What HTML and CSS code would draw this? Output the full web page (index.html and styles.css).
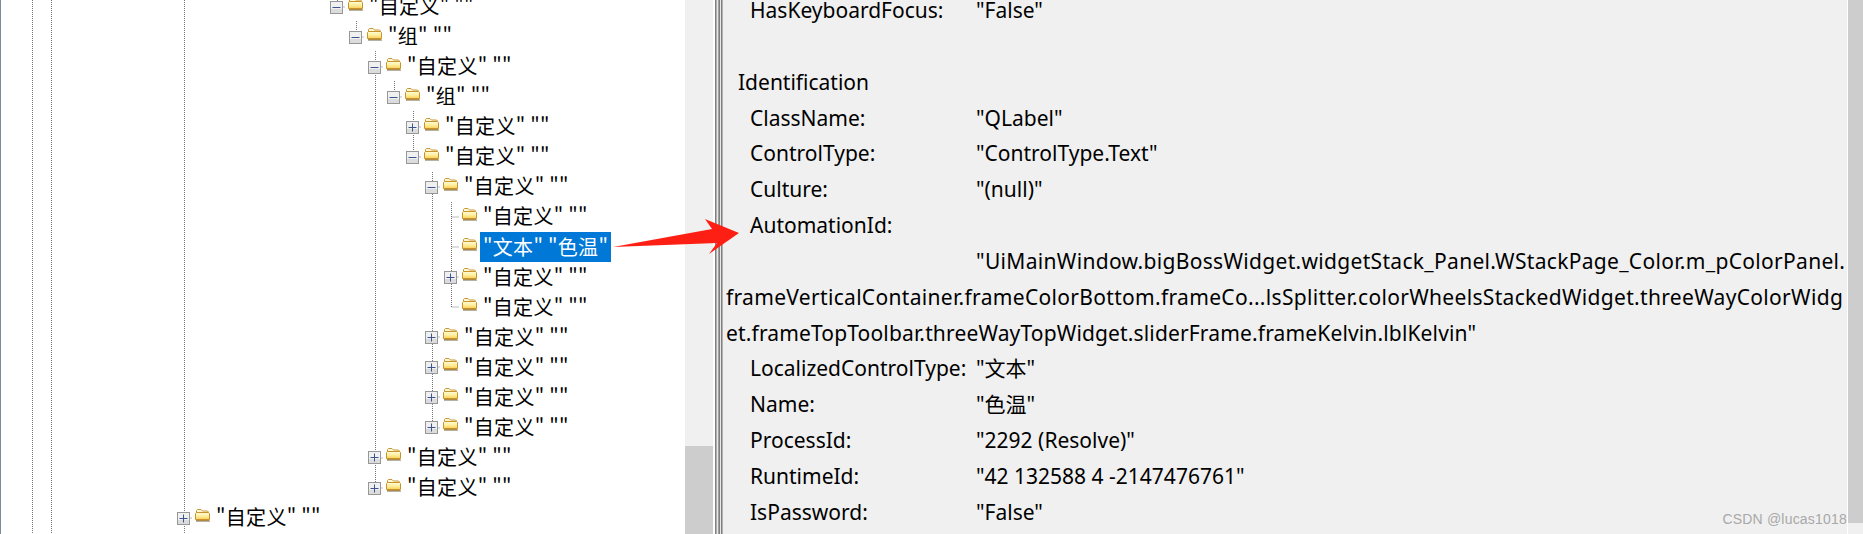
FILE: index.html
```html
<!DOCTYPE html>
<html lang="zh">
<head>
<meta charset="utf-8">
<title>Inspect</title>
<link rel="stylesheet" href="styles.css">
</head>
<body>
<svg class="defs" width="0" height="0" aria-hidden="true">
  <defs>
    <linearGradient id="fg" x1="0" y1="0" x2="0" y2="1">
      <stop offset="0" stop-color="#fffbd8"/>
      <stop offset=".5" stop-color="#fff0a0"/>
      <stop offset="1" stop-color="#fbcf55"/>
    </linearGradient>
    <symbol id="folder" viewBox="0 0 15 14">
      <path d="M1.5 5V2.5L2.5 1.5H6L7.5 3H12.5L13.5 4V5" fill="#fff8d0" stroke="#c8953a"/>
      <path d="M.5 11.5V5.5L1.5 4.5H13.5L14.5 5.5V11.5Z" fill="url(#fg)" stroke="#c8922c"/>
      <path d="M1 12.5H14.5" stroke="#b08a40"/>
      <path d="M1 13.5H15" stroke="#b5b2a8"/>
    </symbol>
    <symbol id="minus" viewBox="0 0 13 13">
      <rect x=".5" y=".5" width="12" height="12" fill="#f0f0f0" stroke="#979797"/>
      <rect x="1" y="8" width="11" height="4" fill="#dcdcdc"/>
      <path d="M2.5 6.5H10.5" stroke="#3c5390"/>
    </symbol>
    <symbol id="plus" viewBox="0 0 13 13">
      <rect x=".5" y=".5" width="12" height="12" fill="#f0f0f0" stroke="#979797"/>
      <rect x="1" y="8" width="11" height="4" fill="#dcdcdc"/>
      <path d="M2.5 6.5H10.5M6.5 2.5V10.5" stroke="#3c5390"/>
    </symbol>
  </defs>
</svg>
<main class="window">
  <section class="tree">
    <svg class="guides" width="685" height="534" aria-hidden="true">
      <path d="M32.5 0V534M51.5 0V534M184.5 0V534M337.5 0V7M356.5 21V37M375.5 51V488M394.5 81V97M413.5 111V157M432.5 172V428M451.5 202V307"/>
      <path d="M337.5 7H345M356.5 37H364M375.5 67H383M394.5 97H402M413.5 127H421M413.5 157H421M432.5 187H440M451.5 217H459M451.5 247H459M451.5 277H459M451.5 307H459M432.5 337H440M432.5 367H440M432.5 397H440M432.5 428H440M375.5 458H383M375.5 488H383M184.5 518H192"/>
    </svg>
    <div class="rows">
      <div class="row l15"><svg class="exp"><use href="#minus"/></svg><svg class="fld"><use href="#folder"/></svg><span class="lbl">"自定义" ""</span></div>
      <div class="row l16"><svg class="exp"><use href="#minus"/></svg><svg class="fld"><use href="#folder"/></svg><span class="lbl">"组" ""</span></div>
      <div class="row l17"><svg class="exp"><use href="#minus"/></svg><svg class="fld"><use href="#folder"/></svg><span class="lbl">"自定义" ""</span></div>
      <div class="row l18"><svg class="exp"><use href="#minus"/></svg><svg class="fld"><use href="#folder"/></svg><span class="lbl">"组" ""</span></div>
      <div class="row l19"><svg class="exp"><use href="#plus"/></svg><svg class="fld"><use href="#folder"/></svg><span class="lbl">"自定义" ""</span></div>
      <div class="row l19"><svg class="exp"><use href="#minus"/></svg><svg class="fld"><use href="#folder"/></svg><span class="lbl">"自定义" ""</span></div>
      <div class="row l20"><svg class="exp"><use href="#minus"/></svg><svg class="fld"><use href="#folder"/></svg><span class="lbl">"自定义" ""</span></div>
      <div class="row l21"><span class="exp"></span><svg class="fld"><use href="#folder"/></svg><span class="lbl">"自定义" ""</span></div>
      <div class="row l21"><span class="exp"></span><svg class="fld"><use href="#folder"/></svg><span class="lbl sel">"文本" "色温"</span></div>
      <div class="row l21"><svg class="exp"><use href="#plus"/></svg><svg class="fld"><use href="#folder"/></svg><span class="lbl">"自定义" ""</span></div>
      <div class="row l21"><span class="exp"></span><svg class="fld"><use href="#folder"/></svg><span class="lbl">"自定义" ""</span></div>
      <div class="row l20"><svg class="exp"><use href="#plus"/></svg><svg class="fld"><use href="#folder"/></svg><span class="lbl">"自定义" ""</span></div>
      <div class="row l20"><svg class="exp"><use href="#plus"/></svg><svg class="fld"><use href="#folder"/></svg><span class="lbl">"自定义" ""</span></div>
      <div class="row l20"><svg class="exp"><use href="#plus"/></svg><svg class="fld"><use href="#folder"/></svg><span class="lbl">"自定义" ""</span></div>
      <div class="row l20"><svg class="exp"><use href="#plus"/></svg><svg class="fld"><use href="#folder"/></svg><span class="lbl">"自定义" ""</span></div>
      <div class="row l17"><svg class="exp"><use href="#plus"/></svg><svg class="fld"><use href="#folder"/></svg><span class="lbl">"自定义" ""</span></div>
      <div class="row l17"><svg class="exp"><use href="#plus"/></svg><svg class="fld"><use href="#folder"/></svg><span class="lbl">"自定义" ""</span></div>
      <div class="row l7"><svg class="exp"><use href="#plus"/></svg><svg class="fld"><use href="#folder"/></svg><span class="lbl">"自定义" ""</span></div>
    </div>
  </section>
  <div class="tree-scroll"><div class="tree-thumb"></div></div>
  <div class="splitter"></div>
  <section class="props">
    <div class="prop"><span class="key">HasKeyboardFocus:</span><span>"False"</span></div>
    <div class="blank"></div>
    <div class="group">Identification</div>
    <div class="prop"><span class="key">ClassName:</span><span>"QLabel"</span></div>
    <div class="prop"><span class="key">ControlType:</span><span>"ControlType.Text"</span></div>
    <div class="prop"><span class="key">Culture:</span><span>"(null)"</span></div>
    <div class="prop"><span class="key">AutomationId:</span><span></span></div>
    <div class="prop"><span class="key"></span><span class="long">"UiMainWindow.bigBossWidget.widgetStack_Panel.WStackPage_Color.m_pColorPanel.</span></div>
    <div class="wrap long">frameVerticalContainer.frameColorBottom.frameCo...lsSplitter.colorWheelsStackedWidget.threeWayColorWidg</div>
    <div class="wrap mid">et.frameTopToolbar.threeWayTopWidget.sliderFrame.frameKelvin.lblKelvin"</div>
    <div class="prop"><span class="key">LocalizedControlType:</span><span>"文本"</span></div>
    <div class="prop"><span class="key">Name:</span><span>"色温"</span></div>
    <div class="prop"><span class="key">ProcessId:</span><span>"2292 (Resolve)"</span></div>
    <div class="prop"><span class="key">RuntimeId:</span><span>"42 132588 4 -2147476761"</span></div>
    <div class="prop"><span class="key">IsPassword:</span><span>"False"</span></div>
    <div class="mark">CSDN @lucas1018</div>
  </section>
  <div class="gap"></div>
  <div class="props-scroll"><div class="props-thumb"></div></div>
  <svg class="arrow" width="140" height="50" viewBox="0 0 140 50" aria-hidden="true">
    <path d="M3 37L102 19L95 9L129 23L99 44L107 33Z" fill="#fe1f14"/>
  </svg>
</main>
</body>
</html>
```
FILE: styles.css
```css
* { box-sizing: border-box; }
html, body { margin: 0; height: 534px; overflow: hidden; background: #fff; }
.defs { position: absolute; }
.window {
  position: relative;
  display: flex;
  width: 1863px;
  height: 534px;
  overflow: hidden;
  font-family: "Noto Sans CJK SC", "Noto Sans", sans-serif;
  color: #000;
}
.tree {
  position: relative;
  width: 685px;
  height: 534px;
  border-left: 1px solid #808a96;
  overflow: hidden;
  background: #fff;
}
.guides { position: absolute; left: -1px; top: 0; }
.guides path { fill: none; stroke: #777; stroke-width: 1; stroke-dasharray: 1 1; }
.rows { position: relative; margin-top: -8px; }
.row { display: flex; align-items: center; height: 30.07px; }
.l7 { padding-left: 176px; }
.l15 { padding-left: 329px; }
.l16 { padding-left: 348px; }
.l17 { padding-left: 367px; }
.l18 { padding-left: 386px; }
.l19 { padding-left: 405px; }
.l20 { padding-left: 424px; }
.l21 { padding-left: 443px; }
.exp { display: block; width: 13px; height: 13px; flex: none; }
.fld { display: block; width: 15px; height: 14px; flex: none; margin: -7px 0 0 5px; }
.lbl { margin: 0 0 2px 3px; padding: 0 3px; font-size: 20px; line-height: 30px; height: 30px; letter-spacing: .3px; white-space: nowrap; }
.sel { background: #0078d7; color: #fff; }
.tree-scroll { width: 28px; height: 534px; background: #f0f0f0; flex: none; padding-top: 446px; }
.tree-thumb { height: 88px; background: #cdcdcd; }
.splitter {
  width: 8px;
  flex: none;
  margin-left: 2px;
  background: linear-gradient(90deg,
    #808080 0 1px, #b0b0b0 1px 2px, #e8e8e8 2px 3px, #a0a0a0 3px 4px,
    #808080 4px 5px, #e8e8e8 5px 6px, #808080 6px 7px, #b0b0b0 7px 8px);
}
.props {
  position: relative;
  flex: 1;
  min-width: 0;
  height: 534px;
  overflow: hidden;
  background: #f0f0f0;
  padding: 0 0 0 3px;
  font-size: 21px;
  line-height: 36px;
  white-space: nowrap;
  font-family: "Noto Sans", "Noto Sans CJK SC", sans-serif;
}
.props > :first-child { margin-top: -8px; }
.prop { display: grid; grid-template-columns: 226px 1fr; padding-left: 24px; height: 35.85px; }
.blank { height: 35.85px; }
.group { padding-left: 12px; height: 35.85px; }
.wrap { height: 35.85px; }
.long { letter-spacing: .32px; }
.mid { letter-spacing: .15px; }
.key { display: block; }
.mark {
  position: absolute;
  right: 0;
  bottom: 5px;
  font: 14px/20px "Liberation Sans", sans-serif;
  letter-spacing: .2px;
  color: #a8a8a8;
}
.gap { width: 1px; background: #fff; flex: none; }
.props-scroll { width: 15px; flex: none; background: #f0f0f0; }
.props-thumb { height: 523px; background: #cdcdcd; }
.arrow { position: absolute; left: 610px; top: 210px; }
```
